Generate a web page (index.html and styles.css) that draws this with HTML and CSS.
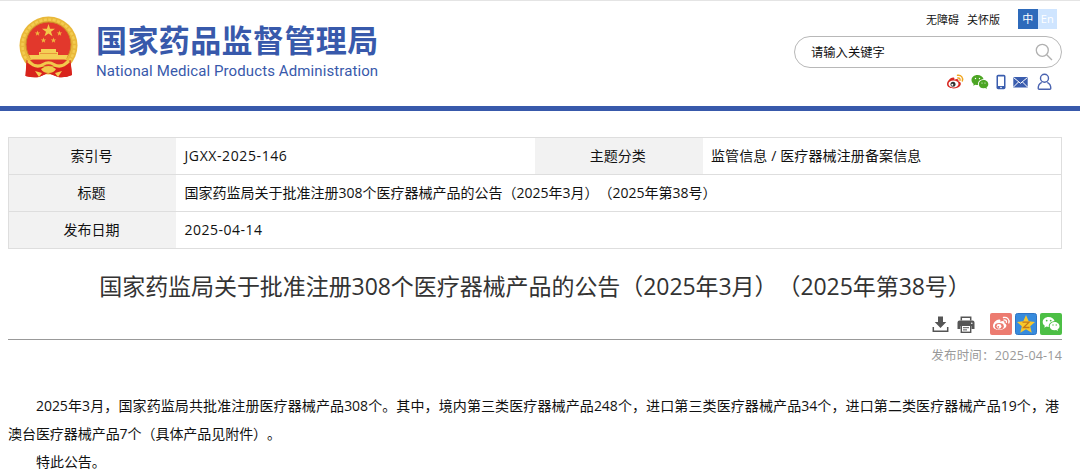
FILE: index.html
```html
<!DOCTYPE html>
<html lang="zh-CN">
<head>
    <meta charset="UTF-8">
    <meta name="viewport" content="width=device-width, initial-scale=1.0">
    <title>国家药品监督管理局</title>
    <link rel="stylesheet" href="styles.css">
</head>
<body>

<header class="header">
    <div class="logo">
        <svg class="emblem" viewBox="0 0 60 64">
            <path d="M8 42L6.500 60Q14 62 20 61L29 57L39 61Q46 62 53 59L51 42L40 51H19Z" fill="#d8231c"/>
            <circle cx="29.500" cy="29.500" r="29" fill="#e9b83a"/>
            <circle cx="29.500" cy="29.500" r="26" fill="none" stroke="#f3cc50" stroke-width="2.500" stroke-dasharray="3 1.5"/>
            <path d="M7.500 44L6.500 60Q14 62 20 61L29 57L39 61Q46 62 53 59L51.500 44L40 51H19Z" fill="#d8231c"/>
            <circle cx="29.500" cy="28.500" r="22.500" fill="#e2382c" stroke="#cf8a28"/>
            <path d="M29.500 8L31.100 12.700H36L32 15.700L33.500 20.300L29.500 17.500L25.500 20.300L27 15.700L23 12.700H27.900Z" fill="#f3c84a"/>
            <path id="star" d="M18.500 14.500L19.200 16.500H21.200L19.600 17.700L20.200 19.700L18.500 18.500L16.800 19.700L17.400 17.700L15.800 16.500H17.800Z" fill="#f0b83f"/>
            <use href="#star" x="6" y="7"/>
            <use href="#star" x="16" y="7"/>
            <use href="#star" x="22"/>
            <path d="M22 33H37V36H39V39H49L47 43.500H12L10 39H20V36H22Z" fill="#f4cf55"/>
            <path d="M21 37.500H38" stroke="#e58a35" stroke-width=".8"/>
            <path d="M11 44H48L44 48Q38 50 34 47H25Q20 50 15 48Z" fill="#dc3026"/>
            <path d="M9 45Q17 53 24 48.500Q29.500 45 35 48.500Q42 53 50 45" fill="none" stroke="#f2c94c" stroke-width="3"/>
            <path d="M22 53Q29.500 47 37 53Q35 57 29.500 57Q24 57 22 53Z" fill="#f1ca4c"/>
            <path d="M16 55L23 57L20 61ZM43 55L36 57L39 61Z" fill="#f4cf55"/>
        </svg>
        <div class="logo-text">
            <div class="logo-cn">国家药品监督管理局</div>
            <div class="logo-en">National Medical Products Administration</div>
        </div>
    </div>
    <div class="tools">
        <div class="links">
            <a>无障碍</a>
            <a>关怀版</a>
            <div class="lang"><span class="cn">中</span><span class="en">En</span></div>
        </div>
        <div class="search">
            <span>请输入关键字</span>
            <svg width="18" height="18" viewBox="0 0 18 18" fill="none" stroke="#b0b0b0" stroke-width="1.3">
                <circle cx="7.300" cy="7.300" r="6"/>
                <path d="M11.700 11.700L17 17"/>
            </svg>
        </div>
        <div class="contact">
            <svg width="18" height="16" viewBox="0 0 18 16">
                <path d="M1 10C1 7 5 3 7.500 3.500C8.700 3.700 8.500 5 8.300 5.800C11 4.500 13 5 12.500 7.300C15 8 15.500 10 14 12C11.500 15.500 1 15.500 1 10Z" fill="#d82720"/>
                <ellipse cx="7.500" cy="10" rx="5" ry="3.400" fill="#fff"/>
                <circle cx="7" cy="10.300" r="2.500" fill="#333"/>
                <circle cx="6.300" cy="10.700" r="1" fill="#fff"/>
                <path d="M11.500 1.300C15 .7 17.500 3.500 16.300 7M11.800 4C13.500 3.700 14.400 4.900 14 6.400" fill="none" stroke="#f0a51e" stroke-width="1.400" stroke-linecap="round"/>
            </svg>
            <svg class="wechat" width="18" height="16" viewBox="0 0 18 16">
                <g fill="#4ca524">
                    <path d="M6.500 1C3 1 .5 3.200 .5 6C.5 7.600 1.400 9 2.700 9.900L2.200 11.700L4.300 10.700C5 10.900 6 11 7 11C6.500 7.500 9 5.200 12.600 5.200C12 2.700 9.500 1 6.500 1Z"/>
                    <path d="M12.500 6C9.800 6 7.800 7.900 7.800 10.200C7.800 12.500 9.800 14.300 12.500 14.300L14.200 14L15.900 15L15.500 13.400C16.700 12.600 17.300 11.400 17.300 10.200C17.300 7.900 15.200 6 12.500 6Z"/>
                </g>
                <g fill="#fff"><circle cx="4.500" cy="4.500" r=".7"/><circle cx="8.500" cy="4.500" r=".7"/><circle cx="11" cy="9" r=".6"/><circle cx="14" cy="9" r=".6"/></g>
            </svg>
            <svg class="phone" width="10" height="16" viewBox="0 0 10 16">
                <rect x=".5" y=".8" width="9" height="14.400" rx="1.600" fill="#3a5dae"/>
                <rect x="2" y="2.500" width="6" height="9.500" fill="#fff"/>
                <circle cx="5" cy="13.500" r=".8" fill="#fff"/>
            </svg>
            <svg class="mail" width="15" height="16" viewBox="0 0 15 16">
                <rect x=".3" y="3" width="14.400" height="10.500" fill="#3a5dae"/>
                <path d="M.5 3.500L7.500 9.300L14.500 3.500M.5 13L5.500 8M14.500 13L9.500 8" fill="none" stroke="#fff"/>
            </svg>
            <svg class="user" width="15" height="18" viewBox="0 0 15 18" fill="none" stroke="#4a63b0" stroke-width="1.400">
                <circle cx="7.500" cy="5.300" r="4"/>
                <path d="M4.700 9.300C2.300 10.500 1.200 12.500 1.200 15.200Q1.200 16.200 2.200 16.200H12.800Q13.800 16.200 13.800 15.200C13.800 12.500 12.700 10.500 10.300 9.300"/>
            </svg>
        </div>
    </div>
</header>

<main class="content">
    <table class="info">
        <tr>
            <th>索引号</th>
            <td class="num">JGXX-2025-146</td>
            <th>主题分类</th>
            <td class="type">监管信息 / 医疗器械注册备案信息</td>
        </tr>
        <tr>
            <th>标题</th>
            <td colspan="3">国家药监局关于批准注册308个医疗器械产品的公告（2025年3月）（2025年第38号）</td>
        </tr>
        <tr>
            <th>发布日期</th>
            <td colspan="3" class="num day">2025-04-14</td>
        </tr>
    </table>

    <h1 class="title">国家药监局关于批准注册308个医疗器械产品的公告（2025年3月）（2025年第38号）</h1>

    <div class="share">
        <svg width="17" height="17" viewBox="0 0 17 17" fill="#555">
            <path d="M6 .5H11V6H14.300L8.500 12L2.700 6H6Z"/>
            <path d="M1.300 11V15.300H15.700V11" fill="none" stroke="#555" stroke-width="1.500"/>
        </svg>
        <svg class="print" width="18" height="17" viewBox="0 0 18 17">
            <path d="M4.300 4.500V1.200H13.700V4.500" fill="none" stroke="#555" stroke-width="1.500"/>
            <path d="M2.500 4.500H15.500Q17.500 4.500 17.500 6.500V13H14.500V10H3.500V13H.5V6.500Q.5 4.500 2.500 4.500Z" fill="#555"/>
            <rect x="4.300" y="9.300" width="9.400" height="7" fill="#fff" stroke="#555" stroke-width="1.400"/>
            <path d="M6 11.700H12M6 13.900H10" stroke="#555"/>
            <circle cx="14.800" cy="7.200" r=".8" fill="#fff"/>
        </svg>
        <svg class="box" width="22" height="22" viewBox="0 0 22 22">
            <rect width="22" height="22" rx="2" fill="#ec7b70"/>
            <path d="M3 13C3 9.500 7 6 9.500 6.500C10.700 6.700 10.500 8 10.200 8.700C13 7.600 15 8 14.400 10.200C17 11 17 13.500 15 15C11.500 18 3 17.500 3 13Z" fill="#fff"/>
            <ellipse cx="9.300" cy="13.200" rx="4.500" ry="3.200" fill="#ec7b70"/>
            <circle cx="9" cy="13.300" r="2.400" fill="#fff"/>
            <circle cx="8.300" cy="13.800" r=".9" fill="#ec7b70"/>
            <path d="M13.500 4.500C17 3.700 20 6.500 18.800 10M14 7C15.700 6.700 16.800 7.900 16.400 9.400" fill="none" stroke="#fff" stroke-width="1.300" stroke-linecap="round"/>
        </svg>
        <svg width="22" height="22" viewBox="0 0 22 22">
            <rect x=".5" y=".5" width="21" height="21" rx="2" fill="#378bdd" stroke="#2f74c4"/>
            <path d="M11 2L13.700 8.300L20 8.900L15.200 13.200L16.700 19.700L11 16.300L5.300 19.700L6.800 13.200L2 8.900L8.300 8.300Z" fill="#f8c72c"/>
            <path d="M7.500 9.200H14L8.500 14.500H14.500" fill="none" stroke="#c47a16" stroke-width="1.300"/>
        </svg>
        <svg width="22" height="22" viewBox="0 0 22 22">
            <rect width="22" height="22" rx="2" fill="#4cbf45"/>
            <g fill="#fff">
                <path d="M8.700 4C5.300 4 2.700 6.200 2.700 9C2.700 10.600 3.500 11.900 4.800 12.800L4.300 14.700L6.500 13.600C7.200 13.800 8 13.900 8.800 13.900C8.300 10.800 11 8.200 14.600 8.200C14 5.700 11.600 4 8.700 4Z"/>
                <path d="M14.500 9C11.800 9 9.700 10.900 9.700 13.200C9.700 15.500 11.800 17.300 14.500 17.300L16.200 17L17.900 18L17.500 16.400C18.800 15.600 19.500 14.500 19.500 13.200C19.500 10.900 17.200 9 14.500 9Z"/>
            </g>
            <g fill="#4cbf45"><circle cx="6.700" cy="7.600" r=".9"/><circle cx="10.700" cy="7.600" r=".9"/><circle cx="13" cy="12" r=".7"/><circle cx="16.200" cy="12" r=".7"/></g>
        </svg>
    </div>

    <div class="date">发布时间：2025-04-14</div>

    <div class="article">
        <p class="lead">2025年3月，国家药监局共批准注册医疗器械产品308个。其中，境内第三类医疗器械产品248个，进口第三类医疗器械产品34个，进口第二类医疗器械产品19个，港澳台医疗器械产品7个（具体产品见附件）。</p>
        <p>特此公告。</p>
    </div>
</main>

</body>
</html>
```

FILE: styles.css
```css
body {
    margin: 0;
    font-family: "Open Sans", "Noto Sans CJK SC", sans-serif;
    font-size: 14px;
    color: #111;
    background: #fff;
    text-spacing-trim: space-all;
    overflow: hidden;
}

.header {
    box-sizing: border-box;
    height: 111px;
    border-top: 1px solid #e4e4e4;
    border-bottom: 5px solid #3859ab;
    display: flex;
    justify-content: space-between;
    padding: 0 18px 0 19px;
}

.logo {
    display: flex;
    padding-top: 15px;
}

.emblem {
    width: 60px;
    height: 64px;
}

.logo-text {
    margin-left: 17px;
    color: #3859ab;
    white-space: nowrap;
}

.logo-cn {
    font-family: "Noto Sans CJK SC", sans-serif;
    font-weight: bold;
    font-size: 31px;
    line-height: 46px;
    height: 46px;
    letter-spacing: 0.4px;
}

.logo-en {
    font-family: Roboto, sans-serif;
    font-size: 15px;
    line-height: 18px;
    letter-spacing: 0.1px;
}

.tools {
    width: 268px;
}

.links {
    display: flex;
    justify-content: flex-end;
    align-items: center;
    margin-top: 8px;
    height: 20px;
    padding-right: 5px;
    font-size: 11px;
}

.links a {
    margin-right: 8px;
}

.lang {
    display: flex;
    margin-left: 10px;
    color: #fff;
    line-height: 20px;
    text-align: center;
}

.lang span {
    width: 19.5px;
}

.cn {
    background: #2d6abb;
}

.en {
    background: #cfe5ff;
}

.search {
    box-sizing: border-box;
    height: 32px;
    margin-top: 7px;
    border: 1px solid #b8b8b8;
    border-radius: 16px;
    display: flex;
    justify-content: space-between;
    align-items: center;
    padding: 0 8px 0 16px;
    font-size: 12.3px;
}

.contact {
    display: flex;
    justify-content: flex-end;
    align-items: center;
    height: 18px;
    margin-top: 5px;
    padding-right: 10px;
}

.wechat {
    margin-left: 7px;
}

.phone {
    margin-left: 7px;
}

.mail {
    margin-left: 7px;
}

.user {
    margin-left: 9px;
}

.content {
    padding: 26px 18px 0 8px;
}

.info {
    width: 1054px;
    border-collapse: collapse;
    table-layout: fixed;
    border: 1px solid #dedede;
}

.info tr {
    height: 37px;
    border-bottom: 1px solid #dedede;
}

.info th {
    width: 167.5px;
    padding: 0 2px 2px 0;
    box-sizing: border-box;
    background: #f2f2f2;
    font-weight: normal;
}

.info td {
    padding: 0 9px 2px 8.5px;
    white-space: nowrap;
}

.info .num {
    letter-spacing: 0.6px;
}

.info .day {
    letter-spacing: 0.5px;
}

.info .type {
    letter-spacing: 0.12px;
}

.title {
    margin: 17px 0 0;
    font-size: 23px;
    font-weight: normal;
    line-height: 40px;
    letter-spacing: -0.06px;
    color: #333;
    text-align: center;
    white-space: nowrap;
}

.share {
    display: flex;
    align-items: center;
    justify-content: flex-end;
    gap: 3px;
    height: 30px;
    padding-top: 3px;
    border-bottom: 1px solid #999;
}

.print {
    margin-left: 5px;
}

.box {
    margin-left: 12px;
}

.date {
    margin-top: 6px;
    line-height: 20px;
    font-size: 12.5px;
    letter-spacing: 0.2px;
    color: #999;
    text-align: right;
}

.article {
    margin-top: 26px;
    margin-right: 3px;
    line-height: 28px;
    letter-spacing: -0.05px;
}

.article p {
    margin: 0;
    text-indent: 28px;
}

.lead {
    text-align: justify;
}
```
